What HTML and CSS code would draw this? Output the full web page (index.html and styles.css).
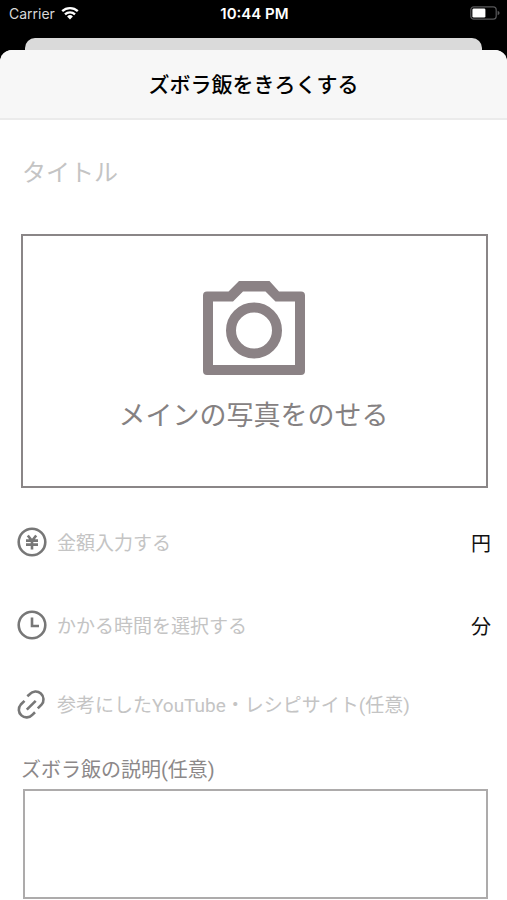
FILE: index.html
```html
<!DOCTYPE html>
<html lang="ja">
<head>
<meta charset="utf-8">
<meta name="viewport" content="width=device-width, initial-scale=1">
<title>ズボラ飯をきろくする</title>
<link rel="stylesheet" href="styles.css">
</head>
<body>
<div class="status">
  <div class="status-left">
    <span class="carrier">Carrier</span>
    <svg class="wifi" viewBox="0 0 18 14" aria-hidden="true">
      <path d="M1.2 5.2a11.2 11.2 0 0 1 15.6 0M4 8.3a7.2 7.2 0 0 1 10 0" fill="none" stroke="#fff" stroke-width="2.3"/>
      <path d="M9 13.4l-2.9-3a4.2 4.2 0 0 1 5.8 0z" fill="#fff"/>
    </svg>
  </div>
  <span class="clock">10:44 PM</span>
  <div class="status-right">
    <svg class="battery" viewBox="0 0 30 14" aria-hidden="true">
      <rect x="0.8" y="0.8" width="25.4" height="12.4" rx="3" fill="none" stroke="#58585a" stroke-width="1.2"/>
      <rect x="2.4" y="2.4" width="13" height="9.2" rx="1.4" fill="#fff"/>
      <path d="M27.6 4.8q2 .8 2 2.2t-2 2.2z" fill="#58585a"/>
    </svg>
  </div>
</div>
<div class="back-card"></div>
<main class="sheet">
  <header class="sheet-header"><h1>ズボラ飯をきろくする</h1></header>
  <form class="form">
    <input class="title-input" type="text" placeholder="タイトル" aria-label="タイトル">
    <button class="photo" type="button">
      <svg class="camera" viewBox="0 0 102 94" aria-hidden="true">
        <path fill-rule="evenodd" d="M36 0H66.500L76 10.500H98a4 4 0 0 1 4 4V90a4 4 0 0 1-4 4H4a4 4 0 0 1-4-4V14.500a4 4 0 0 1 4-4H25.500zM40 10.500L30 20.500H10V84H92V20.500H72.500L62.500 10.500z" fill="#8b8285"/>
        <circle cx="51" cy="49.500" r="23" fill="none" stroke="#8b8285" stroke-width="10"/>
      </svg>
      <span>メインの写真をのせる</span>
    </button>
    <div class="row">
      <label for="price" aria-label="金額">
        <svg class="icon" viewBox="0 0 30 30" aria-hidden="true">
          <circle cx="15" cy="15" r="13.300"/>
          <path d="M10.800 8.500L15 13.800L19.200 8.500M9 13.600H21M9 17.600H21M15 13.500V22.500"/>
        </svg>
      </label>
      <input id="price" type="text" placeholder="金額入力する">
      <span class="unit">円</span>
    </div>
    <div class="row">
      <label for="time" aria-label="時間">
        <svg class="icon" viewBox="0 0 30 30" aria-hidden="true">
          <circle cx="15" cy="15" r="13.300"/>
          <path d="M15 7.500V16H22"/>
        </svg>
      </label>
      <input id="time" type="text" placeholder="かかる時間を選択する">
      <span class="unit">分</span>
    </div>
    <div class="row row-link">
      <label for="link" aria-label="サイト">
        <svg class="icon" viewBox="0 0 30 30" aria-hidden="true">
          <path d="M9.800 19.700L18.700 10.800"/>
          <path d="M10.300 6.300L12.700 4.200A7.400 7.400 0 0 1 24.500 14.700L20.800 18.400M18 22.200L15.300 24.800A7.400 7.400 0 0 1 3.800 14.500L7.500 10.800"/>
        </svg>
      </label>
      <input id="link" type="text" placeholder="参考にしたYouTube・レシピサイト(任意)">
    </div>
    <label class="desc-label" for="desc">ズボラ飯の説明(任意)</label>
    <textarea class="desc" id="desc"></textarea>
  </form>
</main>
</body>
</html>
```

FILE: styles.css
```css
* { box-sizing: border-box; }

body {
  margin: 0;
  background: #000;
  font-family: Roboto, "Noto Sans CJK JP", sans-serif;
}

input, button, textarea {
  font-family: inherit;
  margin: 0;
  padding: 0;
  border: 0;
  border-radius: 0;
  background: none;
}

.status {
  display: grid;
  grid-template-columns: 1fr auto 1fr;
  align-items: center;
  height: 28px;
  padding: 0 7px 2px 9px;
  color: #fff;
  font-family: Inter, sans-serif;
  font-size: 14px;
}

.status-left { display: flex; align-items: center; gap: 6px; }
.status-right { display: flex; justify-content: flex-end; }
.carrier { color: #d8d8d8; }
.clock { font-size: 15px; font-weight: 600; }
.wifi { width: 18px; height: 14px; }
.battery { width: 30px; height: 14px; }

.back-card {
  height: 12px;
  margin: 10px 25px 0;
  border-radius: 10px 10px 0 0;
  background: #dadada;
}

.sheet {
  min-height: calc(100vh - 50px);
  border-radius: 12px 12px 0 0;
  background: #fff;
  overflow: hidden;
}

.sheet-header {
  display: flex;
  align-items: center;
  justify-content: center;
  height: 70px;
  padding-top: 2px;
  border-bottom: 2px solid #ebebeb;
  background: #f7f7f7;
}

h1 {
  margin: 0;
  font-size: 21px;
  line-height: 30px;
  font-weight: 500;
  color: #000;
}

.form { display: flex; flex-direction: column; }

::placeholder { color: #c4c4c4; opacity: 1; }

.title-input {
  height: 40px;
  margin: 33px 20px 0 22px;
  font-size: 24px;
}

.photo {
  display: flex;
  flex-direction: column;
  align-items: center;
  gap: 21px;
  height: 254px;
  margin: 41px 19px 0 21px;
  padding: 45px 2px 0 0;
  border: 2px solid #8a8687;
  color: #858182;
  font-size: 27px;
  line-height: 40px;
}

.camera { width: 102px; height: 94px; }

.row {
  display: flex;
  align-items: center;
  gap: 10px;
  height: 40px;
  margin: 34px 16px 0 17px;
}

.row + .row { margin-top: 43px; }
.row + .row-link { margin-top: 40px; }
.row label { display: flex; }

.row input {
  flex: 1;
  min-width: 0;
  height: 40px;
  padding-top: 2px;
  font-size: 19px;
}

.row-link input { padding-top: 0; }

.icon {
  width: 30px;
  height: 30px;
  fill: none;
  stroke: #777;
  stroke-width: 2.6;
}

.unit { font-size: 20px; color: #111; }

.desc-label {
  margin: 30px 21px 0;
  font-size: 20px;
  line-height: 30px;
  color: #8c8889;
}

.desc {
  height: 110px;
  margin: 4px 19px 0 23px;
  border: 2px solid #adabab;
  font-size: 19px;
  resize: none;
}
```
